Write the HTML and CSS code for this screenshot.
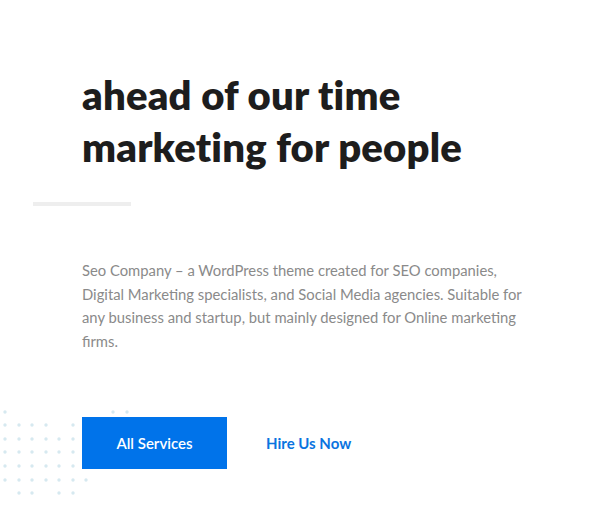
FILE: index.html
```html
<!DOCTYPE html>
<html>
<head>
<meta charset="utf-8">
<link rel="stylesheet" href="styles.css">
</head>
<body>
<section class="hero">
  <h1 class="title">ahead of our time<br>marketing for people</h1>
  <div class="divider"></div>
  <p class="lead">Seo Company – a WordPress theme created for SEO companies, Digital Marketing specialists, and Social Media agencies. Suitable for any business and startup, but mainly designed for Online marketing firms.</p>
  <div class="actions">
    <svg class="dots" width="140" height="100" viewBox="0 0 140 100">
      <g fill="#d6e9f0">
        <circle cx="5" cy="12" r="1.7"/><circle cx="113" cy="12" r="1.7"/><circle cx="127" cy="12" r="1.7"/>
        <circle cx="5" cy="25" r="1.7"/><circle cx="19" cy="25" r="1.7"/><circle cx="32" cy="25" r="1.7"/><circle cx="46" cy="25" r="1.7"/><circle cx="73" cy="25" r="1.7"/>
        <circle cx="5" cy="39" r="1.7"/><circle cx="19" cy="39" r="1.7"/><circle cx="32" cy="39" r="1.7"/><circle cx="46" cy="39" r="1.7"/><circle cx="59" cy="39" r="1.7"/><circle cx="73" cy="39" r="1.7"/>
        <circle cx="5" cy="52" r="1.7"/><circle cx="19" cy="52" r="1.7"/><circle cx="32" cy="52" r="1.7"/><circle cx="46" cy="52" r="1.7"/><circle cx="59" cy="52" r="1.7"/><circle cx="73" cy="52" r="1.7"/>
        <circle cx="5" cy="66" r="1.7"/><circle cx="19" cy="66" r="1.7"/><circle cx="32" cy="66" r="1.7"/><circle cx="46" cy="66" r="1.7"/><circle cx="59" cy="66" r="1.7"/><circle cx="73" cy="66" r="1.7"/>
        <circle cx="5" cy="80" r="1.7"/><circle cx="19" cy="80" r="1.7"/><circle cx="32" cy="80" r="1.7"/><circle cx="46" cy="80" r="1.7"/><circle cx="59" cy="80" r="1.7"/><circle cx="73" cy="80" r="1.7"/><circle cx="86" cy="80" r="1.7"/>
        <circle cx="19" cy="93" r="1.7"/><circle cx="32" cy="93" r="1.7"/><circle cx="59" cy="93" r="1.7"/><circle cx="73" cy="93" r="1.7"/>
      </g>
    </svg>
    <a class="btn btn-primary" href="#">All Services</a>
    <a class="btn btn-link" href="#">Hire Us Now</a>
  </div>
</section>
</body>
</html>
```
FILE: styles.css
```css
* { box-sizing: border-box; }
html, body { margin: 0; padding: 0; background: #fff; }
body { font-family: Lato, "Open Sans", sans-serif; width: 600px; height: 505px; overflow: hidden; }
.hero { padding: 69px 0 0 0; }
.title {
  margin: 0 0 0 82px;
  font-size: 40px;
  line-height: 52px;
  font-weight: 800;
  color: #1d1d1d;
  letter-spacing: 0.2px;
}
.divider {
  width: 98px;
  height: 4px;
  background: #eeeeee;
  margin: 29px 0 0 33px;
}
.lead {
  margin: 53px 0 0 82px;
  width: 450px;
  font-size: 14.8px;
  line-height: 23.5px;
  color: #8a8a8a;
}
.actions {
  position: relative;
  display: flex;
  align-items: center;
  margin-top: 64px;
  padding-left: 82px;
}
.dots { position: absolute; left: 0; top: -17px; }
.btn {
  position: relative;
  text-decoration: none;
  font-size: 15px;
  font-weight: 700;
}
.btn-primary {
  display: flex;
  align-items: center;
  justify-content: center;
  width: 145px;
  height: 52px;
  background: #0073ea;
  color: #fff;
  font-weight: 600;
}
.btn-link { margin-left: 39px; color: #0a74e0; }
```
